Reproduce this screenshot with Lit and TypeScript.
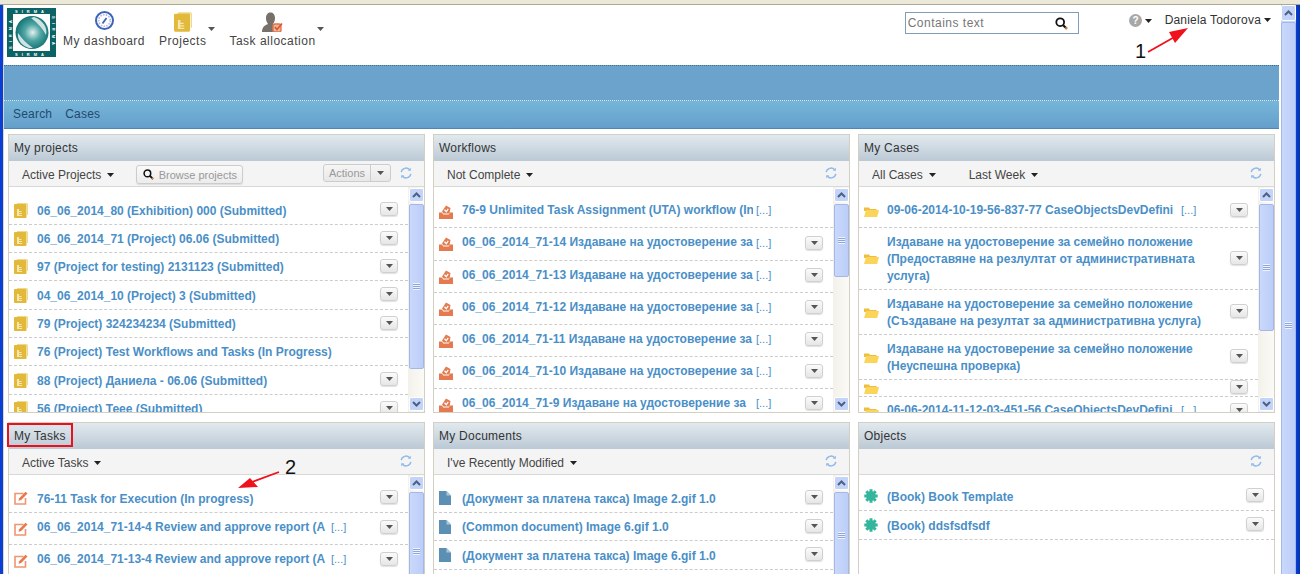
import { LitElement, html, css } from "lit";
import { customElement } from "lit/decorators.js";

type Row = { t: string; h: number; btn?: boolean; more?: boolean };
type Panel = {
  title: string; icon: string; filters: string[]; rows: Row[]; thumb?: number;
  browse?: boolean; pad?: number;
};

const caret = html`<svg class="caret" width="7" height="4" viewBox="0 0 7 4"><path d="M0 0h7L3.5 4z" fill="#222"/></svg>`;
const caretGrey = html`<svg class="caret" width="7" height="4" viewBox="0 0 7 4"><path d="M0 0h7L3.5 4z" fill="#555"/></svg>`;

const refresh = html`<svg class="refresh" width="12" height="12" viewBox="0 0 12 12" fill="none" stroke="#8db8e8" stroke-width="1.4">
  <path d="M1.2 5.2A4.8 4.8 0 0 1 9.6 2.8"/><path d="M10.8 6.8A4.8 4.8 0 0 1 2.4 9.2"/>
  <path d="M10.8 .8v3H7.9z" fill="#8db8e8" stroke="none"/><path d="M1.2 11.2v-3h2.9z" fill="#8db8e8" stroke="none"/></svg>`;

const glass = html`<svg width="13" height="13" viewBox="0 0 13 13" fill="none">
  <circle cx="5.2" cy="5.2" r="3.9" stroke="#111" stroke-width="1.8"/><path d="M8.2 8.2l3.6 3.6" stroke="#111" stroke-width="2.2"/><path d="M10.4 10.4l1.6 1.6" stroke="#d98a2a" stroke-width="2"/></svg>`;

const book = (w = 14, h = 15) => html`<svg width="${w}" height="${h}" viewBox="0 0 14 15">
  <path d="M3 0h9.500a1.500 1.500 0 0 1 1.500 1.500V12h-1V1.500H3z" fill="#efd98a"/>
  <rect x="0" y="1" width="12.500" height="14" rx="1" fill="#e2b93a"/>
  <path d="M3 6h2v7H3zM5 8h2.500v1H5zM5 10h3v1H5zM5 12h3v1H5z" fill="#f6e7ae"/></svg>`;

const wfIcon = html`<svg width="14" height="14" viewBox="0 0 14 14">
  <path d="M0 7.500h3l1.200 2h5.600l1.200-2h3V14H0z" fill="#e47a50"/>
  <path d="M3 6.500L7 .5l4.500 2.500-1 5.500H4.500z" fill="#e47a50"/>
  <path d="M5.500 4.800l1.800 2 1.900-3" fill="none" stroke="#fff" stroke-width="1.300"/></svg>`;

const taskIcon = html`<svg width="14" height="14" viewBox="0 0 14 14" fill="none">
  <path d="M9.500 2.500H1v10.500h10.500V7" stroke="#ef9572" stroke-width="1.600"/>
  <path d="M4.500 9.800l.7-2.600L11.500.8l2 1.800-6.300 6.400z" fill="#e9794c"/></svg>`;

const docIcon = html`<svg width="12" height="14" viewBox="0 0 12 14">
  <path d="M0 0h7.500L12 4.500V14H0z" fill="#5b90b4"/><path d="M7.500 0v4.500H12z" fill="#a9c7da"/></svg>`;

const folder = html`<svg width="15" height="11" viewBox="0 0 15 11">
  <path d="M0 1.500h5l1 1.500h6.500v2H0z" fill="#eebf3f"/><path d="M2 4h13l-1.800 7H0z" fill="#fbd55a"/></svg>`;

const gear = html`<svg width="14" height="14" viewBox="0 0 14 14" fill="#33b69b">
  <circle cx="7" cy="7" r="4.800"/>
  <g stroke="#33b69b" stroke-width="3"><path d="M7 .3v13.400M.3 7h13.400M2.300 2.300l9.400 9.400M11.700 2.300l-9.400 9.400"/></g></svg>`;

const icons: Record<string, unknown> = { book: book(), wf: wfIcon, task: taskIcon, doc: docIcon, folder, gear };

const r = (t: string, h: number, more = false, btn = true): Row => ({ t, h, more, btn });
const cert = "Издаване на удостоверение за семейно положение";

const panels: Panel[] = [
  { title: "My projects", icon: "book", filters: ["Active Projects"], browse: true, thumb: 165, rows: [
    r("06_06_2014_80 (Exhibition) 000 (Submitted)", 29),
    r("06_06_2014_71 (Project) 06.06 (Submitted)", 28),
    r("97 (Project for testing) 2131123 (Submitted)", 28),
    r("04_06_2014_10 (Project) 3 (Submitted)", 29),
    r("79 (Project) 324234234 (Submitted)", 28),
    r("76 (Project) Test Workflows and Tasks (In Progress)", 28, false, false),
    r("88 (Project) Даниела - 06.06 (Submitted)", 29),
    r("56 (Project) Теее (Submitted)", 28),
  ] },
  { title: "Workflows", icon: "wf", filters: ["Not Complete"], thumb: 73, rows: [
    r("76-9 Unlimited Task Assignment (UTA) workflow (In", 32, true, false),
    r("06_06_2014_71-14 Издаване на удостоверение за", 33, true),
    r("06_06_2014_71-13 Издаване на удостоверение за", 32, true),
    r("06_06_2014_71-12 Издаване на удостоверение за", 32, true),
    r("06_06_2014_71-11 Издаване на удостоверение за", 32, true),
    r("06_06_2014_71-10 Издаване на удостоверение за", 32, true),
    r("06_06_2014_71-9 Издаване на удостоверение за", 32, true),
  ] },
  { title: "My Cases", icon: "folder", filters: ["All Cases", "Last Week"], thumb: 127, rows: [
    r("09-06-2014-10-19-56-837-77 CaseObjectsDevDefini", 32, true),
    r(cert + " (Предоставяне на резлултат от административната услуга)", 62),
    r(cert + " (Създаване на резултат за административна услуга)", 45),
    r(cert + " (Неуспешна проверка)", 45),
    r("", 17),
    r("06-06-2014-11-12-03-451-56 CaseObjectsDevDefini", 30, true),
  ] },
  { title: "My Tasks", icon: "task", filters: ["Active Tasks"], thumb: 118, rows: [
    r("76-11 Task for Execution (In progress)", 29),
    r("06_06_2014_71-14-4 Review and approve report (A", 32, true),
    r("06_06_2014_71-13-4 Review and approve report (A", 32, true),
  ] },
  { title: "My Documents", icon: "doc", filters: ["I've Recently Modified"], thumb: 86, rows: [
    r("(Документ за платена такса) Image 2.gif 1.0", 29),
    r("(Common document) Image 6.gif 1.0", 28),
    r("(Документ за платена такса) Image 6.gif 1.0", 29),
  ] },
  { title: "Objects", icon: "gear", filters: [], pad: 7, rows: [
    r("(Book) Book Template", 29),
    r("(Book) ddsfsdfsdf", 29),
  ] },
];

@customElement("app-root")
export class AppRoot extends LitElement {
  static styles = css`
    :host { display: block; position: relative; width: 1300px; height: 574px; overflow: hidden;
      background: #fff; font-family: "Liberation Sans", Arial, sans-serif; font-size: 12px; color: #444; }
    .chrome { height: 4px; background: #ece9d8; border-bottom: 1px solid #aca899; }
    .main { display: flex; height: 569px; }
    .edge { width: 3px; background: #0a3fd6; flex: none; }
    .edge.r { width: 4px; background: linear-gradient(90deg, #0a3fd6, #0433a8); }
    .gutter { width: 1px; background: #d9d6cc; flex: none; }
    .page { width: 1275px; flex: none; }
    .head { height: 60px; display: flex; align-items: flex-start; white-space: nowrap; }
    .logo { margin: 3px 7px 0 3px; flex: none; display: block; }
    .nav { display: flex; flex-direction: column; align-items: center; gap: 2px; color: #444; font-size: 12px; flex: none; letter-spacing: .5px; }
    .nav .ic { height: 21px; display: flex; align-items: flex-end; }
    .nav-dash { margin: 4px 14px 0 0; gap: 4px; }
    .nav-proj, .nav-task { margin: 6px 0 0 0; }
    .top-caret { margin: 22px 0 0 0; display: flex; }
    .c1 { margin-left: 2px; margin-right: 14px; }
    .c2 { margin-left: 1px; }
    .search { margin: 7px 0 0 581px; height: 20px; width: 160px; border: 1px solid #7f9db9; display: flex; flex: none;
      align-items: center; justify-content: space-between; padding: 0 10px 0 2px; color: #777; letter-spacing: .5px; }
    .help { margin: 9px 0 0 50px; display: flex; align-items: center; gap: 3px; }
    .user { margin: 8px 0 0 13px; display: flex; align-items: center; gap: 3px; color: #333; letter-spacing: .2px; }
    .band { height: 34px; background: #6ca3cd; border-top: 1px dotted #3f6f8f; border-bottom: 1px dotted #dfe9f0; }
    .sub { height: 28px; box-sizing: border-box; display: flex; align-items: center; gap: 13px; padding: 0 0 2px 9px;
      color: #1f4a6e; background: linear-gradient(#76b6da, #659fcb); border-bottom: 1px solid #4f86b5; letter-spacing: .2px; }
    .grid { display: grid; grid-template-columns: repeat(3, 417px); grid-auto-rows: 279px; gap: 9px 8px; padding: 5px 0 0 4px; }
    .panel { border: 1px solid #d3cfc3; display: flex; flex-direction: column; overflow: hidden; background: #fff; }
    .ptitle { height: 26px; flex: none; display: flex; align-items: center; padding-left: 5px; color: #333; letter-spacing: .25px;
      background: linear-gradient(#e1e9ee, #bbc9d5); }
    .tools { height: 23px; padding-top: 2px; flex: none; display: flex; align-items: center; padding-left: 13px; background: #f4f4f4;
      border-bottom: 1px solid #d8d8d4; color: #444; }
    .filter { display: flex; align-items: center; gap: 6px; margin-right: 33px; }
    .browse { margin-left: -11px; height: 17px; width: 105px; display: flex; align-items: center; gap: 5px; justify-content: center;
      border: 1px solid #ccc; border-radius: 3px; background: linear-gradient(#fafafa, #ececec); color: #999; box-shadow: 0 1px 1px #ddd; font-size: 11px; }
    .browse svg { width: 11px; height: 11px; }
    .right { margin: -3px 12px 0 auto; display: flex; align-items: center; }
    .actions { display: flex; height: 16px; border: 1px solid #ccc; border-radius: 3px; color: #999; margin-right: 9px; font-size: 11px;
      background: linear-gradient(#f6f6f6, #e8e8e8); }
    .actions span { width: 46px; display: flex; align-items: center; justify-content: center; border-right: 1px solid #ccc; }
    .actions i { width: 19px; display: flex; align-items: center; justify-content: center; }
    .refresh { display: block; }
    .body { flex: 1; display: flex; min-height: 0; }
    .list { flex: 1; min-width: 0; overflow: hidden; }
    .row { display: flex; align-items: center; box-sizing: border-box; border-bottom: 1px dashed #ccc; padding: 0 10px 0 5px; }
    .ricon { width: 23px; flex: none; display: flex; align-items: center; }
    .title { font-weight: 700; color: #4a8fc7; line-height: 17px; max-width: 330px; margin-top: 2px; }
    .title.cut { width: 291px; white-space: nowrap; overflow: hidden; flex: none; margin: 0 0 3px; }
    .more { color: #4a8fc7; font-size: 11px; margin: 0 0 3px 3px; white-space: nowrap; }
    .btn { margin-left: auto; flex: none; margin-top: -2px; width: 16px; height: 12px; border: 1px solid #d0d0d0; border-radius: 3px;
      background: linear-gradient(#fbfbfb, #e6e6e6); box-shadow: 0 1px 1px #e2e2e2; display: flex; align-items: center; justify-content: center; }
    .more + .btn { margin-top: -3px; }
    .sb { width: 16px; flex: none; display: flex; flex-direction: column; align-items: center; background: linear-gradient(90deg, #f3f1ea, #fbfaf6); padding: 1px 0; box-sizing: border-box; }
    .sbb { width: 15px; height: 14px; flex: none; border-radius: 2px; background: #c4d4f8; border: 1px solid #fff; box-sizing: border-box;
      display: flex; align-items: center; justify-content: center; }
    .thumb { width: 15px; flex: none; margin-top: 2px; background: linear-gradient(90deg, #c9d8fb, #bccdf8); border: 1px solid #a3b8e6; border-radius: 2px; box-sizing: border-box;
      display: flex; align-items: center; justify-content: center; }
    .grip { width: 7px; height: 7px; background: repeating-linear-gradient(#eef3ff 0 1px, #8ea6dc 1px 2px); }
    .space { flex: 1; }
    .winsb { width: 15px; flex: none; margin-left: 2px; display: flex; flex-direction: column; overflow: hidden; background: #c6d6fb; }
    .winsb .sbb { width: 15px; height: 16px; }
    .winsb .thumb { width: 15px; height: 606px; margin-top: 1px; }
    .anno { position: absolute; left: 0; top: 0; pointer-events: none; }
    .num { position: absolute; font-size: 20px; color: #111; line-height: 20px; }
  `;

  private sb(thumb: number) {
    return html`<div class="sb">
      <div class="sbb"><svg width="9" height="6" viewBox="0 0 9 6" fill="none"><path d="M1 5l3.500-3.500L8 5" stroke="#4d6185" stroke-width="2"/></svg></div>
      <div class="thumb" style="height:${thumb}px"><div class="grip"></div></div>
      <div class="space"></div>
      <div class="sbb"><svg width="9" height="6" viewBox="0 0 9 6" fill="none"><path d="M1 1l3.500 3.500L8 1" stroke="#4d6185" stroke-width="2"/></svg></div>
    </div>`;
  }

  private panel(p: Panel) {
    return html`<section class="panel">
      <div class="ptitle">${p.title}</div>
      <div class="tools">
        ${p.filters.map((f) => html`<div class="filter">${f} ${caret}</div>`)}
        ${p.browse ? html`<div class="browse">${glass} Browse projects</div>` : ""}
        <div class="right">
          ${p.browse ? html`<div class="actions"><span>Actions</span><i>${caretGrey}</i></div>` : ""}
          ${refresh}
        </div>
      </div>
      <div class="body">
        <div class="list" style="padding-top:${p.pad ?? 9}px">
          ${p.rows.map((x) => html`<div class="row" style="height:${x.h}px">
            <div class="ricon">${icons[p.icon]}</div>
            <div class="title ${x.more ? "cut" : ""}">${x.t}</div>
            ${x.more ? html`<span class="more">[...]</span>` : ""}
            ${x.btn ? html`<div class="btn">${caretGrey}</div>` : ""}
          </div>`)}
        </div>
        ${p.thumb ? this.sb(p.thumb) : ""}
      </div>
    </section>`;
  }

  render() {
    return html`
      <div class="chrome"></div>
      <div class="main">
        <div class="edge"></div><div class="gutter"></div>
        <div class="page">
          <header class="head">
            <svg class="logo" width="49" height="49" viewBox="0 0 49 49">
              <defs>
                <radialGradient id="sph" cx=".52" cy=".5" r=".55"><stop offset="0" stop-color="#e4f0ef"/><stop offset=".45" stop-color="#4ea5a3"/><stop offset="1" stop-color="#0d6b6e"/></radialGradient>
              </defs>
              <rect width="49" height="49" fill="#0c6366"/>
              <rect x="6" y="6" width="37" height="37" fill="#fff"/>
              <g fill="#fff" font-family="Liberation Sans" font-size="4" font-weight="700" text-anchor="middle">
                <text x="24.500" y="4.500" letter-spacing="4">SIRMA</text>
                <text x="24.500" y="47.500" letter-spacing="4">SIRMA</text>
                <text transform="translate(4.500 24.500) rotate(-90)" letter-spacing="4">SIRMA</text>
                <text transform="translate(44.500 24.500) rotate(90)" letter-spacing="4">SIRMA</text>
              </g>
              <circle cx="25" cy="24.500" r="16.500" fill="url(#sph)"/>
              <path d="M27 9c9 3 14 11 12 18-3-6-8-12-15-17z" fill="#cfe3e2"/>
              <path d="M22 40c-7-2-12-8-11-15 4 6 9 11 15 15z" fill="#cfe3e2"/>
            </svg>
            <div class="nav nav-dash">
              <div class="ic"><svg width="19" height="19" viewBox="0 0 19 19" fill="none">
                <circle cx="9.500" cy="9.500" r="8.500" stroke="#3f63b8" stroke-width="2"/>
                <circle cx="9.500" cy="9.500" r="5.800" stroke="#a9bde6" stroke-width="1.600" stroke-dasharray="1.500 1.300"/>
                <path d="M7.500 12.500l4-5.500" stroke="#3f63b8" stroke-width="1.800"/></svg></div>
              My dashboard
            </div>
            <div class="nav nav-proj"><div class="ic">${book(18, 20)}</div>Projects</div>
            <div class="top-caret c1">${caretGrey}</div>
            <div class="nav nav-task">
              <div class="ic"><svg width="22" height="21" viewBox="0 0 22 21">
                <path d="M0 21c0-5 3-7 6-8-1.500-2-2-4-2-6 0-3.500 2-5.500 4.500-5.500S13 3.500 13 7c0 2-.5 4-2 6l3 1v7z" fill="#77706a"/>
                <rect x="11" y="13" width="8" height="8" rx="2" fill="#eeb49b" stroke="#e0764c" stroke-width="1.400"/>
                <path d="M13 16l2 2.500 5-6" fill="none" stroke="#d9582e" stroke-width="1.600"/></svg></div>
              Task allocation
            </div>
            <div class="top-caret c2">${caretGrey}</div>
            <div class="search"><span>Contains text</span>${glass}</div>
            <div class="help">
              <svg width="13" height="13" viewBox="0 0 13 13"><circle cx="6.500" cy="6.500" r="6.500" fill="#a8a8a8"/><text x="6.500" y="10" text-anchor="middle" font-size="10" font-weight="700" font-family="Liberation Sans" fill="#fff">?</text></svg>
              ${caret}
            </div>
            <div class="user">Daniela Todorova ${caret}</div>
          </header>
          <div class="band"></div>
          <nav class="sub"><span>Search</span><span>Cases</span></nav>
          <main class="grid">${panels.map((p) => this.panel(p))}</main>
        </div>
        <div class="winsb">
          <div class="sbb"><svg width="9" height="6" viewBox="0 0 9 6" fill="none"><path d="M1 5l3.500-3.500L8 5" stroke="#4d6185" stroke-width="2"/></svg></div>
          <div class="thumb"><div class="grip"></div></div>
        </div>
        <div class="edge r"></div>
      </div>
      <svg class="anno" width="1300" height="574" viewBox="0 0 1300 574" fill="none">
        <rect x="8" y="424" width="64" height="22" stroke="#e8111c" stroke-width="2"/>
        <path d="M1148 52L1178 35" stroke="#f0111c" stroke-width="1.800"/>
        <path d="M1188 28L1169 32L1175 43z" fill="#f0111c"/>
        <path d="M279 472L252 482" stroke="#f0111c" stroke-width="1.800"/>
        <path d="M238 488L250 478L258 487z" fill="#f0111c"/>
      </svg>
      <span class="num" style="left:1135px;top:41px">1</span>
      <span class="num" style="left:285px;top:457px">2</span>
    `;
  }
}
